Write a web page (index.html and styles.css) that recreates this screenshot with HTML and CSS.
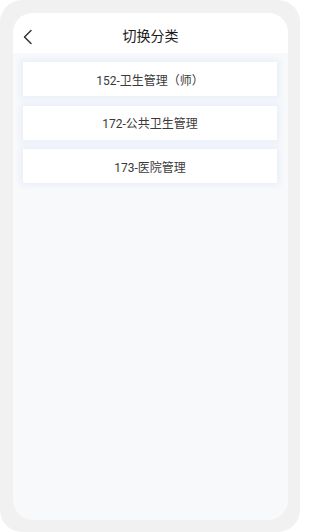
FILE: index.html
```html
<!DOCTYPE html>
<html lang="zh-CN">
<head>
<meta charset="utf-8">
<link rel="stylesheet" href="styles.css">
</head>
<body>
<div class="frame">
  <div class="panel">
    <header class="header">
      <span class="back">
        <svg width="12" height="16" viewBox="0 0 12 16"><path d="M9 1.5 L2.5 8 L9 14.5" fill="none" stroke="#333" stroke-width="1.5" stroke-linecap="round" stroke-linejoin="round"/></svg>
      </span>
      <h1 class="title">切换分类</h1>
    </header>
    <ul class="list">
      <li class="item">152-卫生管理（师）</li>
      <li class="item">172-公共卫生管理</li>
      <li class="item">173-医院管理</li>
    </ul>
  </div>
</div>
</body>
</html>
```

FILE: styles.css
```css
html, body {
  margin: 0;
  padding: 0;
  background: #ffffff;
}
body {
  font-family: Roboto, "Noto Sans CJK SC", sans-serif;
}
.frame {
  width: 300px;
  height: 532px;
  box-sizing: border-box;
  background: #f1f1f1;
  border-radius: 22px;
  padding: 13px 12px 12px 13px;
  overflow: hidden;
}
.panel {
  height: 507px;
  background: #f8f9fb;
  border-radius: 20px;
  overflow: hidden;
  display: flex;
  flex-direction: column;
}
.header {
  height: 40px;
  box-sizing: border-box;
  padding-top: 5px;
  background: #ffffff;
  display: flex;
  align-items: center;
  justify-content: center;
  position: relative;
}
.back {
  position: absolute;
  left: 9px;
  top: 16px;
  width: 12px;
  height: 16px;
  display: block;
}
.back svg { display: block; }
.title {
  margin: 0;
  font-size: 14px;
  font-weight: 400;
  color: #1a1a1a;
  line-height: 20px;
}
.list {
  list-style: none;
  margin: 0;
  padding: 9px 11px 0 10px;
  display: flex;
  flex-direction: column;
  gap: 9.5px;
}
.item {
  height: 34px;
  background: #ffffff;
  box-shadow: 0 0 6px 2px rgba(218, 230, 250, 0.6);
  display: flex;
  align-items: center;
  justify-content: center;
  font-size: 12px;
  color: #3a3a3a;
}
```
